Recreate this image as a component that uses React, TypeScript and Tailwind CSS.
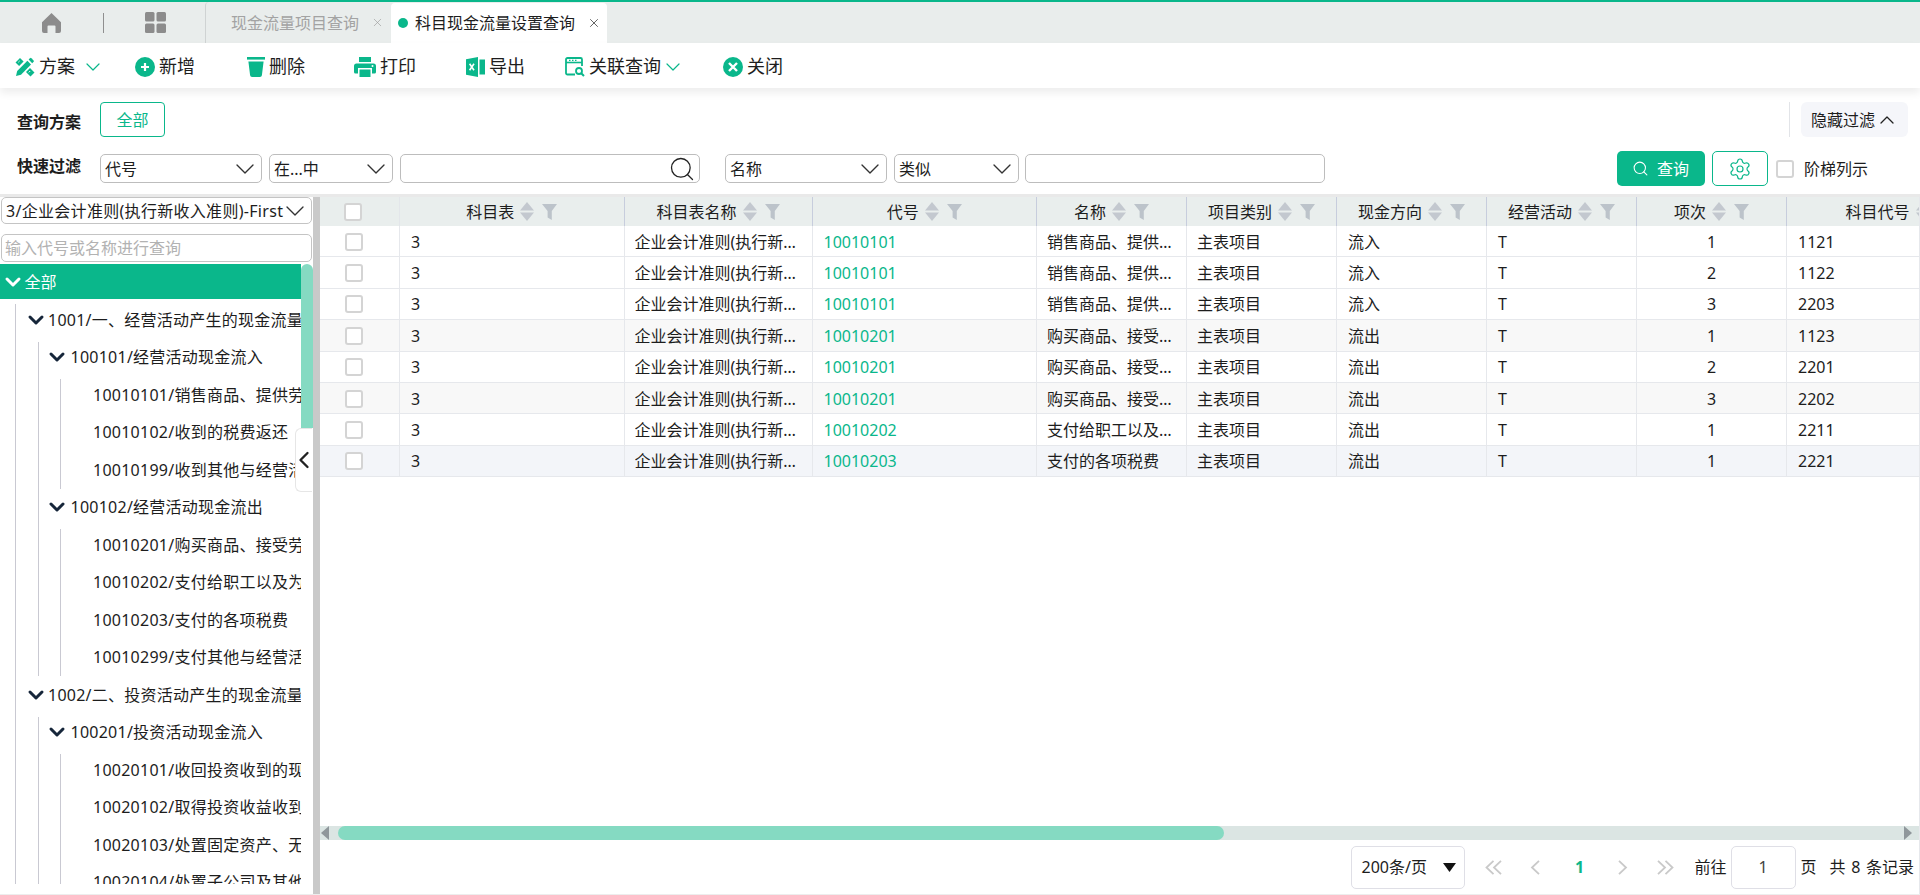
import React from "react";
import { ChevronDown, ChevronLeft, ChevronUp, Search, Settings, X } from "lucide-react";

const GREEN = "#0ab78b";

const columns = ["科目表", "科目表名称", "代号", "名称", "项目类别", "现金方向", "经营活动", "项次", "科目代号"];

const rows = [
  { code: "10010101", name: "销售商品、提供劳务收到的现金", dir: "流入", seq: 1, acct: "1121", bg: "bg-white" },
  { code: "10010101", name: "销售商品、提供劳务收到的现金", dir: "流入", seq: 2, acct: "1122", bg: "bg-white" },
  { code: "10010101", name: "销售商品、提供劳务收到的现金", dir: "流入", seq: 3, acct: "2203", bg: "bg-white" },
  { code: "10010201", name: "购买商品、接受劳务支付的现金", dir: "流出", seq: 1, acct: "1123", bg: "bg-[#f8f8f8]" },
  { code: "10010201", name: "购买商品、接受劳务支付的现金", dir: "流出", seq: 2, acct: "2201", bg: "bg-white" },
  { code: "10010201", name: "购买商品、接受劳务支付的现金", dir: "流出", seq: 3, acct: "2202", bg: "bg-[#f8f8f8]" },
  { code: "10010202", name: "支付给职工以及为职工支付的现金", dir: "流出", seq: 1, acct: "2211", bg: "bg-white" },
  { code: "10010203", name: "支付的各项税费", dir: "流出", seq: 1, acct: "2221", bg: "bg-[#f3f5f9]" },
];

const tree = [
  {
    label: "1001/一、经营活动产生的现金流量",
    groups: [
      {
        label: "100101/经营活动现金流入",
        leaves: ["10010101/销售商品、提供劳务收到的现金", "10010102/收到的税费返还", "10010199/收到其他与经营活动有关的现金"],
      },
      {
        label: "100102/经营活动现金流出",
        leaves: ["10010201/购买商品、接受劳务支付的现金", "10010202/支付给职工以及为职工支付的现金", "10010203/支付的各项税费", "10010299/支付其他与经营活动有关的现金"],
      },
    ],
  },
  {
    label: "1002/二、投资活动产生的现金流量",
    groups: [
      {
        label: "100201/投资活动现金流入",
        leaves: ["10020101/收回投资收到的现金", "10020102/取得投资收益收到的现金", "10020103/处置固定资产、无形资产", "10020104/处置子公司及其他营业单位"],
      },
    ],
  },
];

function PlanIcon() {
  return (
    <svg width="20" height="20" viewBox="0 0 20 20" fill={GREEN}>
      <path d="M0.500 5.500 5 1l3.600 3.600-4.500 4.500zM11 15l4-4 4.500 4.500-4 4z" />
      <path d="M3.400 5.200 4.600 4M13.800 15.400l1.400-1.400" stroke="#fff" strokeWidth="1" />
      <path d="M1 19l1.200-5L12.400 3.800l3.600 3.600L6 17.800z" />
      <path d="M13.600 2.600 15 1.200a1 1 0 0 1 1.400 0l2.200 2.200a1 1 0 0 1 0 1.400l-1.400 1.400z" />
    </svg>
  );
}

function PlusIcon() {
  return (
    <svg width="20" height="20" viewBox="0 0 20 20">
      <circle cx="10" cy="10" r="10" fill={GREEN} />
      <path d="M10 6v8M6 10h8" stroke="#fff" strokeWidth="2.200" />
    </svg>
  );
}

function TrashIcon() {
  return (
    <svg width="18" height="20" viewBox="0 0 18 20" fill={GREEN}>
      <rect x="0" y="0" width="18" height="2.600" />
      <path d="M1.400 4.600h15.200l-1.700 13.600a2 2 0 0 1-2 1.800H5.100a2 2 0 0 1-2-1.800z" />
    </svg>
  );
}

function PrinterIcon() {
  return (
    <svg width="22" height="20" viewBox="0 0 22 20" fill={GREEN}>
      <path d="M5 0h12v5H5z" />
      <path d="M2.500 6.500h17A2.500 2.500 0 0 1 22 9v6a1.500 1.500 0 0 1-1.500 1.500H18V11H4v5.500H1.500A1.500 1.500 0 0 1 0 15V9a2.500 2.500 0 0 1 2.500-2.500z" />
      <path d="M5.500 12.500h11V20h-11z" />
      <circle cx="18.500" cy="9" r="1" fill="#fff" />
    </svg>
  );
}

function ExcelIcon() {
  return (
    <svg width="19" height="20" viewBox="0 0 19 20">
      <path d="M0 2.200 12 0v20L0 17.800z" fill={GREEN} />
      <path d="M13.500 2.500H19v15h-5.500z" fill={GREEN} />
      <path d="M3.600 6.800 8 13.200M8 6.800l-4.400 6.400" stroke="#fff" strokeWidth="1.600" />
    </svg>
  );
}

function WindowSearchIcon() {
  return (
    <svg width="20" height="20" viewBox="0 0 20 20" fill="none" stroke={GREEN}>
      <path d="M10 17.500H2.500A1.500 1.500 0 0 1 1 16V2.500A1.500 1.500 0 0 1 2.500 1h13A1.500 1.500 0 0 1 17 2.500V9" strokeWidth="1.800" />
      <path d="M1 5.500h16" strokeWidth="1.600" />
      <path d="M4 3.300h1.500M7 3.300h1.500M10 3.300h1.500" strokeWidth="1.200" />
      <circle cx="14" cy="14" r="3" strokeWidth="1.800" />
      <path d="m16.200 16.200 2.800 2.800" strokeWidth="2" />
    </svg>
  );
}

function CloseIcon() {
  return (
    <svg width="20" height="20" viewBox="0 0 20 20">
      <circle cx="10" cy="10" r="10" fill={GREEN} />
      <path d="m6 6 8 8M14 6l-8 8" stroke="#fff" strokeWidth="2.400" />
    </svg>
  );
}

function HomeIcon() {
  return (
    <svg width="19" height="20" viewBox="0 0 19 20" fill="#8c8c8c">
      <path d="M9.500 0 19 9.200V18a2 2 0 0 1-2 2h-3.500v-6.500a1 1 0 0 0-1-1h-6a1 1 0 0 0-1 1V20H2a2 2 0 0 1-2-2V9.200z" />
    </svg>
  );
}

function GridIcon() {
  return (
    <svg width="21" height="21" viewBox="0 0 21 21" fill="#8c8c8c">
      <rect width="9.500" height="9.500" rx="1.500" />
      <rect x="11.500" width="9.500" height="9.500" rx="1.500" />
      <rect y="11.500" width="9.500" height="9.500" rx="1.500" />
      <rect x="11.500" y="11.500" width="9.500" height="9.500" rx="1.500" />
    </svg>
  );
}

function SortFilter() {
  return (
    <span className="flex items-center gap-[8px] shrink-0">
      <svg width="14" height="19" viewBox="0 0 14 19" fill="#c3c8cf">
        <path d="M7 0 14 8.500H0z" />
        <path d="M7 19 14 10.500H0z" />
      </svg>
      <svg width="15" height="16" viewBox="0 0 15 16" fill="#bcc3ca">
        <path d="M0 0h15L9.800 7v9L5.600 13.500V7z" />
      </svg>
    </span>
  );
}

function PagerArrow({ dir, double }: { dir: "left" | "right"; double?: boolean }) {
  const flip = dir === "right" ? "-scale-x-100" : "";
  return double ? (
    <svg width="17" height="15" viewBox="0 0 17 15" fill="none" stroke="#c9c9c9" strokeWidth="1.800" className={`shrink-0 ${flip}`}>
      <path d="M8.500 0.800 1.500 7.500l7 6.700M16 0.800 9 7.500l7 6.700" />
    </svg>
  ) : (
    <svg width="10" height="15" viewBox="0 0 10 15" fill="none" stroke="#c9c9c9" strokeWidth="1.800" className={`shrink-0 ${flip}`}>
      <path d="M9 0.800 2 7.500l7 6.700" />
    </svg>
  );
}

function Checkbox({ className = "" }: { className?: string }) {
  return <span className={`block w-[18px] h-[18px] rounded-[3px] border-2 border-[#d4d4d4] bg-white shrink-0 ${className}`} />;
}

function SelectBox({ label, className }: { label: string; className: string }) {
  return (
    <div className={`flex items-center justify-between h-[29px] border border-[#bdbdbd] rounded-[5px] bg-white pl-[4px] shrink-0 ${className}`}>
      <span>{label}</span>
      <ChevronDown size={32} strokeWidth={1} color="#333" className="shrink-0 -my-[2px]" />
    </div>
  );
}

function ToolItem({ icon, label, className, caret }: { icon: React.ReactNode; label: string; className: string; caret?: string }) {
  return (
    <div className={`flex items-center text-[18px] shrink-0 ${className}`}>
      {icon}
      <span className="ml-[4px]">{label}</span>
      {caret && <ChevronDown size={24} strokeWidth={1.2} color={GREEN} className={caret} />}
    </div>
  );
}

function TreeRow({ label, pad, branch }: { label: string; pad: string; branch?: string }) {
  return (
    <div className={`flex items-center h-[34.500px] pb-[3px] whitespace-nowrap tracking-[0.25px] shrink-0 ${pad}`}>
      {branch && <ChevronDown size={24} strokeWidth={3} color="#16263a" className={`shrink-0 ${branch}`} />}
      <span>{label}</span>
    </div>
  );
}

function Tree() {
  return (
    <div className="flex flex-col gap-[3px] ml-[15px] mt-[5px] mb-[10px] flex-1 min-h-0 overflow-hidden border-l border-[#c9c9d2]">
      {tree.map((top) => (
        <React.Fragment key={top.label}>
          <TreeRow label={top.label} pad="pl-[7.500px]" branch="mr-[0.500px]" />
          <div className="flex flex-col gap-[3px] ml-[22px] border-l border-[#c9c9d2] shrink-0">
            {top.groups.map((group) => (
              <React.Fragment key={group.label}>
                <TreeRow label={group.label} pad="pl-[6px]" branch="mr-[1.500px]" />
                <div className="flex flex-col gap-[3px] ml-[21px] border-l border-[#c9c9d2] shrink-0">
                  {group.leaves.map((leaf) => (
                    <TreeRow key={leaf} label={leaf} pad="pl-[32px]" />
                  ))}
                </div>
              </React.Fragment>
            ))}
          </div>
        </React.Fragment>
      ))}
    </div>
  );
}

const gridCols = "grid grid-cols-[80px_224.500px_188px_224.500px_150px_150px_150px_150px_150px_225px] w-[1692px]";

export default function App() {
  return (
    <div className="flex flex-col w-[1920px] h-[895px] overflow-hidden bg-white text-[16px] text-[#1d1d1d] font-['Noto_Sans','Noto_Sans_CJK_SC',sans-serif]">
      {/* Tabs */}
      <div className="flex items-stretch h-[43px] shrink-0 border-t-[2px] border-[#0ab78b] bg-[#e9edec]">
        <div className="flex items-center w-[205px] shrink-0 pl-[42px]">
          <HomeIcon />
          <span className="w-px h-[20px] bg-[#8f8f8f] ml-[42px] mr-[41px]" />
          <GridIcon />
        </div>
        <div className="flex items-center w-[186px] pl-[25px] border-l border-[#cfd3d3] text-[#a3a3a3] rounded-tl-[4px]">
          <span>现金流量项目查询</span>
          <X size={13} strokeWidth={1.2} color="#9a9a9a" className="ml-[12px]" />
        </div>
        <div className="flex items-center w-[216px] pl-[7px] bg-white rounded-t-[4px] mt-px">
          <span className="w-[10px] h-[10px] rounded-full bg-[#0ab78b]" />
          <span className="ml-[7px]">科目现金流量设置查询</span>
          <X size={14} strokeWidth={1.3} color="#333" className="ml-[12px]" />
        </div>
      </div>

      {/* Toolbar */}
      <div className="relative z-10 flex items-center h-[45px] pt-[2px] shrink-0 bg-white shadow-[0_5px_8px_rgba(0,0,0,0.07)]">
        <ToolItem icon={<PlanIcon />} label="方案" className="ml-[15px]" caret="ml-[6px]" />
        <ToolItem icon={<PlusIcon />} label="新增" className="ml-[30px]" />
        <ToolItem icon={<TrashIcon />} label="删除" className="ml-[52px]" />
        <ToolItem icon={<PrinterIcon />} label="打印" className="ml-[49px]" />
        <ToolItem icon={<ExcelIcon />} label="导出" className="ml-[50px]" />
        <ToolItem icon={<WindowSearchIcon />} label="关联查询" className="ml-[40px]" caret="ml-0" />
        <ToolItem icon={<CloseIcon />} label="关闭" className="ml-[38px]" />
      </div>

      {/* Filters */}
      <div className="flex flex-col h-[106px] shrink-0 pt-[14px]">
        <div className="flex items-center h-[35px]">
          <span className="w-[100px] pl-[17px] mt-[5px] font-bold shrink-0">查询方案</span>
          <button className="w-[65px] h-[35px] rounded-[4px] border border-[#0ab78b] text-[#0ab78b]">全部</button>
          <span className="ml-auto w-px h-[35px] bg-[#e2e4e8]" />
          <button className="flex items-center pl-[10px] ml-[11px] mr-[12px] w-[107px] h-[35px] rounded-[6px] bg-[#f5f6fa]">
            隐藏过滤
            <ChevronUp size={24} strokeWidth={1.3} color="#222" className="shrink-0" />
          </button>
        </div>
        <div className="flex items-center h-[35px] mt-[14px]">
          <span className="w-[100px] pl-[17px] mb-[5px] font-bold shrink-0">快速过滤</span>
          <SelectBox label="代号" className="w-[162px]" />
          <SelectBox label="在...中" className="w-[124px] ml-[7px]" />
          <div className="flex items-center justify-end h-[29px] w-[300px] ml-[7px] pr-[3px] border border-[#bdbdbd] rounded-[5px] shrink-0">
            <Search size={28} strokeWidth={1.1} color="#222" className="shrink-0 -my-[1px]" />
          </div>
          <SelectBox label="名称" className="w-[162px] ml-[25px]" />
          <SelectBox label="类似" className="w-[125px] ml-[7px]" />
          <div className="h-[29px] w-[300px] ml-[6px] border border-[#bdbdbd] rounded-[5px] shrink-0" />
          <button className="flex items-center pl-[15px] gap-[8px] w-[88px] h-[35px] ml-[292px] rounded-[5px] bg-[#0ab78b] text-white shrink-0">
            <Search size={17} strokeWidth={1.5} color="#fff" className="shrink-0" />
            查询
          </button>
          <button className="flex items-center justify-center w-[56px] h-[35px] ml-[7px] rounded-[5px] border border-[#0ab78b] shrink-0">
            <Settings size={24} strokeWidth={1.2} color={GREEN} />
          </button>
          <Checkbox className="ml-[8px]" />
          <span className="ml-[10px]">阶梯列示</span>
        </div>
      </div>

      {/* Body */}
      <div className="flex flex-1 min-h-0 border-t-[3px] border-[#e9e9e9] border-b border-b-[#ededed]">
        <aside className="relative flex flex-col w-[313px] shrink-0">
          <div className="flex items-center justify-between h-[27px] mx-px border border-[#c4c4c4] rounded-[5px] pl-[4px] shrink-0">
            <span className="whitespace-nowrap tracking-[0.3px]">3/企业会计准则(执行新收入准则)-First</span>
            <ChevronDown size={32} strokeWidth={1} color="#333" className="shrink-0 -my-[3px] -ml-[4px]" />
          </div>
          <input
            readOnly
            placeholder="输入代号或名称进行查询"
            className="h-[28px] mx-px mt-[10px] px-[3px] border border-[#c4c4c4] rounded-[5px] placeholder:text-[#b2b2b2] outline-none shrink-0"
          />
          <div className="flex flex-1 min-h-0 mt-[2px]">
            <div className="flex flex-col w-[301px] shrink-0 overflow-hidden">
              <div className="flex items-center h-[35px] pl-[0.500px] bg-[#0ab78b] text-white shrink-0">
                <ChevronDown size={24} strokeWidth={3} color="#fff" className="shrink-0" />
                全部
              </div>
              <Tree />
            </div>
            <div className="w-[12px] h-[164px] rounded-t-[6px] bg-[#85dac2]" />
          </div>
          <div className="absolute right-px top-[231px] flex items-center justify-center w-[17px] h-[64px] rounded-l-[6px] border border-r-0 border-[#e6e6e6] bg-white">
            <ChevronLeft size={28} strokeWidth={2} color="#222" className="shrink-0" />
          </div>
        </aside>
        <div className="w-[7px] bg-[#c9c9c9] shrink-0" />

        <main className="flex flex-col flex-1 min-w-0 border-r border-[#e6e8ec]">
          <div className="flex-1 min-h-0 overflow-hidden">
            <div className={`${gridCols} h-[29px] bg-[#e9eeed]`}>
              <div className="flex items-center justify-center pr-[13px] border-r border-[#e3e6ea]">
                <Checkbox />
              </div>
              {columns.map((title) => (
                <div key={title} className="flex items-center justify-center gap-[6px] border-r border-[#c7cddd]">
                  <span className="whitespace-nowrap">{title}</span>
                  <SortFilter />
                </div>
              ))}
            </div>
            {rows.map((row, i) => (
              <div key={i} className={`${gridCols} h-[31.400px] border-b border-[#e6e8ec] ${row.bg}`}>
                <div className="flex items-center justify-center pr-[11px] pt-px border-r border-[#e6e8ec]">
                  <Checkbox />
                </div>
                <div className="flex items-center px-[11px] pt-px border-r border-[#e6e8ec]">3</div>
                <div className="flex items-center px-[10px] pt-px border-r border-[#e6e8ec] min-w-0">
                  <span className="truncate">企业会计准则(执行新收入准则)</span>
                </div>
                <div className="flex items-center px-[11px] pt-px border-r border-[#e6e8ec] text-[#0ab78b]">{row.code}</div>
                <div className="flex items-center px-[10px] pt-px border-r border-[#e6e8ec] min-w-0">
                  <span className="truncate">{row.name}</span>
                </div>
                <div className="flex items-center px-[10px] pt-px border-r border-[#e6e8ec]">主表项目</div>
                <div className="flex items-center px-[11px] pt-px border-r border-[#e6e8ec]">{row.dir}</div>
                <div className="flex items-center px-[11px] pt-px border-r border-[#e6e8ec]">T</div>
                <div className="flex items-center justify-center pt-px border-r border-[#e6e8ec]">{row.seq}</div>
                <div className="flex items-center px-[11px] pt-px">{row.acct}</div>
              </div>
            ))}
          </div>

          {/* Horizontal scrollbar */}
          <div className="flex items-center h-[14px] bg-[#dbe5e3] shrink-0">
            <svg width="9" height="14" viewBox="0 0 9 14" fill="#8f979b" className="ml-[1px]">
              <path d="M8 0v14L0 7z" />
            </svg>
            <div className="w-[886px] h-[14px] ml-[8px] rounded-full bg-[#85dac2]" />
            <svg width="9" height="14" viewBox="0 0 9 14" fill="#8f979b" className="ml-auto mr-[7px]">
              <path d="M1 0v14l8-7z" />
            </svg>
          </div>

          {/* Pager */}
          <div className="flex items-center justify-end h-[54px] shrink-0 pr-[5px]">
            <div className="flex items-center justify-between w-[114px] h-[43px] pl-[9px] pr-[8px] border border-[#dfdfe6] rounded-[5px]">
              <span>200条/页</span>
              <svg width="13" height="9" viewBox="0 0 13 9" fill="#111">
                <path d="M0 0h13L6.500 9z" />
              </svg>
            </div>
            <span className="ml-[20px] flex"><PagerArrow dir="left" double /></span>
            <span className="ml-[28px] flex"><PagerArrow dir="left" /></span>
            <span className="ml-[34px] w-[10px] text-center font-bold text-[#0ab78b]">1</span>
            <span className="ml-[34px] flex"><PagerArrow dir="right" /></span>
            <span className="ml-[29px] flex"><PagerArrow dir="right" double /></span>
            <span className="ml-[20px]">前往</span>
            <div className="flex items-center justify-center w-[65px] h-[43px] ml-[4px] border border-[#dfdfe6] rounded-[5px] text-[#444]">1</div>
            <span className="ml-[5px]">页</span>
            <span className="ml-[13px] [word-spacing:1.5px]">共 8 条记录</span>
          </div>
        </main>
      </div>
    </div>
  );
}
